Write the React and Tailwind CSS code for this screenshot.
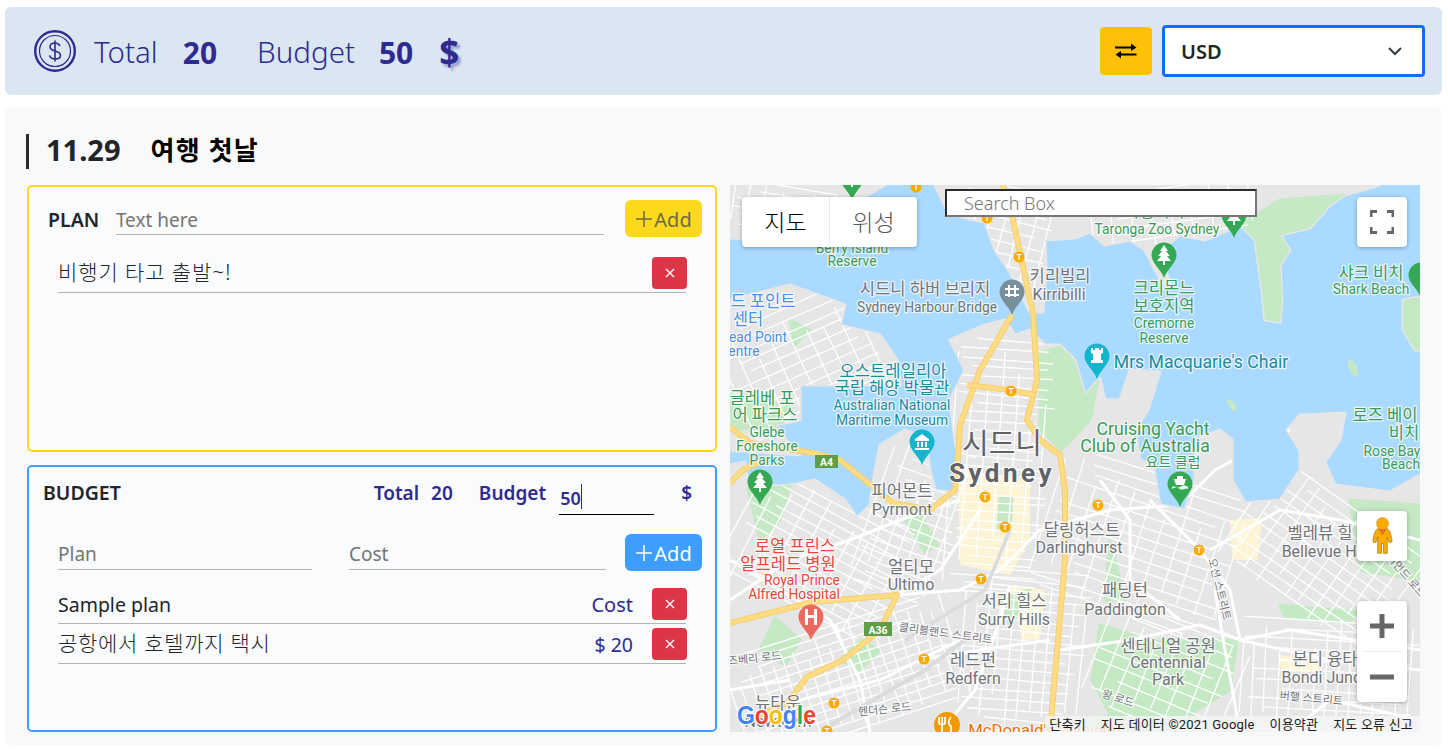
import React from "react";

const ink = "#2e2a8f";

const LAND = [
  "730,185 730,238 770,240 795,228 825,222 850,205 885,185",
  "935,185 948,212 965,218 985,222 995,250 1010,272 1030,312 1043,312 1046,270 1045,240 1075,238 1090,232 1105,245 1130,240 1145,250 1163,285 1170,285 1160,250 1180,235 1205,240 1240,225 1255,240 1262,290 1265,320 1280,322 1282,300 1280,265 1290,250 1280,235 1310,228 1330,205 1345,195 1380,185",
  "730,300 790,285 845,305 840,325 880,335 897,360 900,385 850,385 800,385 800,420 775,425 790,445 800,455 730,450",
  "730,465 745,462 748,488 790,485 815,480 845,500 857,518 870,505 875,470 880,445 905,430 925,437 930,470 935,490 955,493 960,470 955,440 950,400 965,370 950,340 985,325 1005,320 1015,335 1030,330 1045,345 1060,345 1075,360 1085,395 1100,378 1105,400 1120,400 1130,370 1160,372 1148,410 1135,430 1140,460 1153,465 1160,505 1185,510 1195,480 1195,440 1220,430 1232,440 1232,480 1245,503 1280,500 1300,470 1300,450 1287,430 1300,415 1345,413 1340,440 1325,462 1335,485 1390,492 1420,475 1420,732 730,732",
  "1420,297 1403,300 1403,330 1415,350 1420,350",
];

const PARKS = [
  "1240,225 1255,240 1262,290 1265,320 1280,322 1282,300 1280,265 1290,250 1280,235 1310,228 1330,205 1345,195 1280,200",
  "1040,352 1060,347 1075,362 1085,395 1098,380 1090,420 1062,450 1040,430",
  "1100,625 1150,640 1237,640 1230,690 1190,714 1110,714 1092,680",
  "1280,605 1357,612 1350,622 1285,618",
  "1350,500 1420,505 1420,580 1360,570",
  "915,505 938,545 925,552 905,520",
  "775,618 800,640 785,665 760,650",
  "860,640 880,650 860,670 840,660",
  "1000,498 1012,498 1010,530 998,530",
  "1110,540 1125,600 1105,600",
  "1403,300 1420,297 1420,350 1415,350 1403,330",
  "1090,720 1180,700 1210,732 1060,732",
  "748,488 790,485 780,520 760,540",
  "730,400 790,405 780,430 730,428",
  "1000,598 1030,590 1010,625",
  "790,320 810,330 795,345",
];

const TINT = [
  "958,470 1030,480 1030,540 1010,575 960,565",
  "1230,520 1262,518 1258,560 1232,560",
  "1278,655 1325,660 1320,672 1282,672",
  "1010,585 1045,590 1040,640 1022,640",
];

const DISTRICTS = [
  [730, 300, 170, 130, -24, 11, 18],
  [730, 185, 110, 50, 10, 9, 16],
  [950, 185, 100, 130, 15, 11, 15],
  [1090, 185, 170, 60, -8, 12, 20],
  [730, 490, 180, 130, 28, 10, 18],
  [870, 440, 90, 160, 20, 11, 13],
  [950, 340, 100, 260, 4, 9, 15],
  [1040, 470, 200, 150, 18, 11, 19],
  [1230, 500, 190, 120, 35, 11, 16],
  [730, 620, 240, 112, -18, 9, 12],
  [960, 570, 130, 162, 5, 10, 12],
  [1090, 620, 150, 112, 22, 13, 18],
  [1240, 620, 180, 112, 3, 10, 12],
];

let seed = 17;
const rnd = () => {
  seed = (seed * 1103515245 + 12345) & 0x7fffffff;
  return seed / 0x7fffffff;
};

const STREETS = DISTRICTS.map(([x, y, w, h, a, s, t]) => {
  const lines = [];
  for (let yy = y; yy < y + h; yy += s) {
    const off = rnd() * w * 0.25;
    lines.push([x + off, yy + rnd() * 3, x + w - rnd() * w * 0.2, yy + rnd() * 3]);
  }
  for (let xx = x; xx < x + w; xx += t) {
    const off = rnd() * h * 0.3;
    lines.push([xx + rnd() * 3, y + off, xx + rnd() * 3, y + h - rnd() * h * 0.25]);
  }
  return { a, cx: x + w / 2, cy: y + h / 2, lines };
});

const WHITE_ROADS = [
  "730,600 790,560 850,540 900,520 960,500",
  "897,595 960,590 1000,570 1040,530 1110,510 1180,505 1215,470 1290,430",
  "1150,500 1200,550 1230,590 1240,640",
  "1210,550 1280,510 1340,520 1420,540",
  "1240,640 1290,630 1420,650",
  "1060,650 1130,640 1200,625 1240,640 1330,660 1420,670",
  "897,595 940,570 980,510",
  "730,560 780,590 830,620 860,680 870,732",
  "924,659 980,650 1050,640",
  "940,732 975,690 1000,620 1010,585",
  "1215,590 1225,650 1240,732",
  "800,700 880,680 960,640",
  "730,690 790,680",
  "1290,732 1330,700 1420,720",
  "1100,480 1130,520 1130,580 1180,620",
];

const HIGHWAYS = [
  "1003,185 1012,215 1023,267 1033,313 1037,380 1027,420 1040,440 1060,455 1065,490 1065,560 1058,640 1050,732",
  "1012,315 980,370 960,425 957,470 955,490 930,510 893,503 840,460 813,453 750,443 730,427",
  "730,483 743,470 763,460",
  "730,623 813,602 897,595 880,630 843,660 807,677 787,703 750,720",
  "967,385 1010,390 1035,395",
];

const GREEN = "#3a9b57";
const GREY = "#6f7479";
const BLUE = "#4a8fe8";
const TEAL = "#1b8a9e";
const RED = "#e8453c";
const DARK = "#5f6368";

const SIZE = { 15: 16.6, 12.5: 13.8, 14: 16, 16.5: 17.6, 13: 14 };

const LABELS = [
  ["타롱가 주", 1157, 217, 15, GREEN],
  ["Taronga Zoo Sydney", 1157, 234, 12.5, GREEN],
  ["Berry Island", 852, 253, 12.5, GREEN],
  ["Reserve", 852, 266, 12.5, GREEN],
  ["드 포인트", 763, 307, 15, BLUE],
  ["센터", 748, 325, 15, BLUE],
  ["ead Point", 758, 342, 12.5, BLUE],
  ["entre", 744, 356, 12.5, BLUE],
  ["시드니 하버 브리지", 925, 295, 15, GREY],
  ["Sydney Harbour Bridge", 927, 312, 12.5, GREY],
  ["키리빌리", 1060, 282, 15, GREY],
  ["Kirribilli", 1059, 300, 14, GREY],
  ["크리몬느", 1164, 294, 15, GREEN],
  ["보호지역", 1164, 312, 15, GREEN],
  ["Cremorne", 1164, 328, 12.5, GREEN],
  ["Reserve", 1164, 343, 12.5, GREEN],
  ["샤크 비치", 1371, 279, 15, GREEN],
  ["Shark Beach", 1371, 294, 12.5, GREEN],
  ["Mrs Macquarie's Chair", 1201, 368, 16.5, TEAL],
  ["오스트레일리아", 893, 377, 15, TEAL],
  ["국립 해양 박물관", 892, 394, 15, TEAL],
  ["Australian National", 892, 410, 12.5, TEAL],
  ["Maritime Museum", 892, 425, 12.5, TEAL],
  ["글레베 포", 762, 404, 15, GREEN],
  ["어 파크스", 765, 421, 15, GREEN],
  ["Glebe", 767, 437, 12.5, GREEN],
  ["Foreshore", 767, 451, 12.5, GREEN],
  ["Parks", 767, 465, 12.5, GREEN],
  ["Cruising Yacht", 1153, 435, 16.5, GREEN],
  ["Club of Australia", 1145, 452, 16.5, GREEN],
  ["요트 클럽", 1173, 467, 13, GREEN],
  ["로즈 베이", 1385, 421, 15, GREEN],
  ["비치", 1404, 439, 15, GREEN],
  ["Rose Bay", 1392, 456, 12.5, GREEN],
  ["Beach", 1401, 469, 12.5, GREEN],
  ["피어몬트", 902, 497, 15, GREY],
  ["Pyrmont", 902, 515, 14, GREY],
  ["달링허스트", 1082, 536, 15, GREY],
  ["Darlinghurst", 1079, 553, 14, GREY],
  ["벨레뷰 힐", 1320, 539, 15, GREY],
  ["Bellevue Hill", 1325, 557, 14, GREY],
  ["로열 프린스", 795, 552, 15, RED],
  ["알프레드 병원", 788, 570, 15, RED],
  ["Royal Prince", 802, 585, 12.5, RED],
  ["Alfred Hospital", 794, 599, 12.5, RED],
  ["얼티모", 911, 573, 15, GREY],
  ["Ultimo", 911, 590, 14, GREY],
  ["패딩턴", 1125, 596, 15, GREY],
  ["Paddington", 1125, 615, 14, GREY],
  ["서리 힐스", 1014, 607, 15, GREY],
  ["Surry Hills", 1014, 625, 14, GREY],
  ["센테니얼 공원", 1168, 652, 15, GREY],
  ["Centennial", 1168, 668, 14, GREY],
  ["Park", 1168, 685, 14, GREY],
  ["레드펀", 973, 666, 15, GREY],
  ["Redfern", 973, 684, 14, GREY],
  ["본디 융타", 1325, 665, 15, GREY],
  ["Bondi Junction", 1335, 683, 14, GREY],
  ["뉴타운", 778, 709, 15, GREY],
  ["Newtown", 778, 727, 14, GREY],
  ["McDonald's Wynyard", 1045, 736, 15, "#e8710a"],
];

const ROAD_NAMES = [
  ["클리블랜드 스트리트", 945, 637, 8],
  ["오션 스트리트", 1216, 590, 76],
  ["헨더슨 로드", 885, 713, -6],
  ["즈베리 로드", 755, 662, -6],
  ["왕 로드", 1117, 702, 18],
  ["버핼 스트리트", 1311, 702, 5],
  ["리치먼드 로드", 1400, 574, 50],
];

const T_STOPS = [
  [916, 187], [987, 218], [1019, 257], [1011, 391], [985, 497], [1005, 527],
  [981, 579], [924, 659], [834, 703], [827, 731], [1098, 505], [1199, 550],
];

function Pin({ x, y, color, children }) {
  return (
    <g transform={`translate(${x} ${y})`}>
      <path d="M0 35C-3 26-12.500 20-12.500 12A12.500 12.500 0 0 1 12.500 12C12.500 20 3 26 0 35Z" fill={color} />
      {children}
    </g>
  );
}

const Tree = () => (
  <path d="M0 2L4 8H2L6 13H3L7 18H1V22H-1V18H-7L-3 13H-6L-2 8H-4Z" fill="#fff" />
);

function MapDrawing() {
  return (
    <svg
      viewBox="730 185 690 547"
      className="absolute inset-0 w-full h-full font-['Roboto','Noto_Sans_CJK_KR',sans-serif]"
    >
      <defs>
        <clipPath id="land">
          {LAND.map((p, i) => (
            <polygon key={i} points={p} />
          ))}
        </clipPath>
      </defs>
      <rect x="730" y="185" width="690" height="547" fill="#aadaff" />
      {LAND.map((p, i) => (
        <polygon key={i} points={p} fill="#e6e6e6" stroke="#e6e6e6" strokeWidth="3" strokeLinejoin="round" />
      ))}
      <ellipse cx="1353" cy="368" rx="4" ry="9" transform="rotate(-25 1353 368)" fill="#c5e8c5" />
      <ellipse cx="1232" cy="405" rx="3" ry="7" transform="rotate(-35 1232 405)" fill="#c5e8c5" />
      <g clipPath="url(#land)">
        {TINT.map((p, i) => (
          <polygon key={i} points={p} fill="#fdf4d6" />
        ))}
        {PARKS.map((p, i) => (
          <polygon key={i} points={p} fill="#c5e8c5" stroke="#c5e8c5" strokeWidth="3" strokeLinejoin="round" />
        ))}
        {STREETS.map((d, i) => (
          <g key={i} transform={`rotate(${d.a} ${d.cx} ${d.cy})`} stroke="#fff" strokeWidth="1.3">
            {d.lines.map((l, j) => (
              <line key={j} x1={l[0]} y1={l[1]} x2={l[2]} y2={l[3]} />
            ))}
          </g>
        ))}
        {WHITE_ROADS.map((p, i) => (
          <polyline key={i} points={p} fill="none" stroke="#fff" strokeWidth="3" strokeLinejoin="round" />
        ))}
      </g>
      <path d="M905 640L985 590L1010 530" fill="none" stroke="#d9dbdd" strokeWidth="3.5" />
      <path d="M830 725L925 670L965 640" fill="none" stroke="#d9dbdd" strokeWidth="4" />
      {HIGHWAYS.map((p, i) => (
        <g key={i} fill="none" strokeLinejoin="round">
          <polyline points={p} stroke="#f6cf6d" strokeWidth="6" />
          <polyline points={p} stroke="#fddc85" strokeWidth="4" />
        </g>
      ))}
      {T_STOPS.map(([x, y], i) => (
        <g key={i}>
          <circle cx={x} cy={y} r="5.5" fill="#f9ab00" />
          <path d={`M${x - 2.5} ${y - 2.5}H${x + 2.5}M${x} ${y - 2.5}V${y + 3}`} stroke="#fff" strokeWidth="1.2" />
        </g>
      ))}
      <g paintOrder="stroke" stroke="#ffffff" strokeOpacity="0.75" strokeWidth="2.5" strokeLinejoin="round" textAnchor="middle">
        {LABELS.map(([t, x, y, s, c], i) => (
          <text key={i} x={x} y={y} fontSize={SIZE[s]} fill={c}>
            {t}
          </text>
        ))}
        {ROAD_NAMES.map(([t, x, y, r], i) => (
          <text key={i} x={x} y={y} fontSize="11" fill={GREY} transform={`rotate(${r} ${x} ${y})`}>
            {t}
          </text>
        ))}
        <text x="1002" y="454" fontSize="29" fill={DARK}>시드니</text>
        <text x="1002" y="482" fontSize="26" fontWeight="700" letterSpacing="3.5" fill={DARK}>Sydney</text>
      </g>
      <g>
        <rect x="815" y="455" width="23" height="13" fill="#5f9e44" />
        <text x="826.500" y="466" fontSize="10.500" fontWeight="700" fill="#fff" textAnchor="middle">A4</text>
        <rect x="864" y="622" width="28" height="14" fill="#5f9e44" />
        <text x="878" y="633.500" fontSize="10.500" fontWeight="700" fill="#fff" textAnchor="middle">A36</text>
      </g>
      <Pin x={852} y={165} color="#34a853"><Tree /></Pin>
      <Pin x={1234} y={203} color="#34a853"><Tree /></Pin>
      <Pin x={1164} y={243} color="#34a853"><Tree /></Pin>
      <Pin x={1421} y={263} color="#34a853" />
      <Pin x={760} y={470} color="#34a853"><Tree /></Pin>
      <Pin x={1097} y={344} color="#12b5cb">
        <path d="M-6 4H-4V6H-2V4H2V6H4V4H6V9L4 10V16H6V19H-6V16H-4V10L-6 9Z" fill="#fff" />
      </Pin>
      <Pin x={922} y={430} color="#12b5cb">
        <path d="M-7 9L0 4L7 9V11H-7ZM-5 12H-3V17H-5ZM-1 12H1V17H-1ZM3 12H5V17H3ZM-7 18H7V20H-7Z" fill="#fff" />
      </Pin>
      <Pin x={1012} y={280} color="#78909c">
        <path d="M-7 8H-4V5H-2V8H2V5H4V8H7V10H4V17H2V10H-2V17H-4V10H-7ZM-7 14H7V16H-7Z" fill="#fff" />
      </Pin>
      <Pin x={1180} y={472} color="#34a853">
        <path d="M-3 4H3V7H6L4 13H-4L-6 7H-3ZM-8 15C-5 13-3 17 0 15S5 13 8 15V17C5 15 3 19 0 17S-5 15-8 17Z" fill="#fff" />
      </Pin>
      <Pin x={811} y={605} color="#ea6a5f">
        <path d="M-6 4H-3V10H3V4H6V20H3V13H-3V20H-6Z" fill="#fff" />
      </Pin>
      <circle cx="947" cy="725" r="13" fill="#f29900" />
      <path d="M942 717V733M939 717V723C939 725 945 725 945 723V717M951 717C948 720 948 725 951 726V733" fill="none" stroke="#fff" strokeWidth="1.7" />
      <text
        x="737"
        y="724"
        fontSize="25"
        fontFamily="'Liberation Sans', sans-serif"
        fontWeight="700"
        stroke="#ffffff"
        strokeWidth="2.5"
        paintOrder="stroke"
        textLength="79"
        lengthAdjust="spacingAndGlyphs"
      >
        <tspan fill="#4285f4">G</tspan>
        <tspan fill="#ea4335">o</tspan>
        <tspan fill="#fbbc05">o</tspan>
        <tspan fill="#4285f4">g</tspan>
        <tspan fill="#34a853">l</tspan>
        <tspan fill="#ea4335">e</tspan>
      </text>
    </svg>
  );
}

function Pegman() {
  return (
    <svg viewBox="0 0 26 40" className="w-[25px] h-[40px]">
      <path
        d="M9 12H17C20 13 22 16 23 26L20 27L18 21V38H14V28H12V38H8V21L6 27L3 26C4 16 6 13 9 12Z"
        fill="#f9ab00"
        stroke="#a8741a"
        strokeWidth="0.7"
      />
      <circle cx="13" cy="7" r="6.3" fill="#f9ab00" stroke="#c28a1e" strokeWidth="0.5" />
      <path d="M8.500 13H17.500L13 19Z" fill="#e2702c" />
    </svg>
  );
}

function MapPanel() {
  return (
    <div className="relative h-[547px] overflow-hidden bg-[#aadaff]">
      <MapDrawing />
      <div className="absolute left-3 top-3 flex h-[50px] w-[175px] rounded-sm bg-white text-[23px] font-light shadow-[0_1px_4px_rgba(0,0,0,0.3)]">
        <div className="flex flex-1 items-center justify-center border-r border-[#ebebeb] text-black">지도</div>
        <div className="flex flex-1 items-center justify-center text-[#565656]">위성</div>
      </div>
      <input
        readOnly
        placeholder="Search Box"
        className="absolute left-[215px] top-1 h-[28px] w-[312px] border-2 border-b-[#767676] border-l-[#2b2b2b] border-r-[#767676] border-t-[#2b2b2b] bg-white pl-[17px] text-[18px] font-light outline-none placeholder:text-[#757575]"
      />
      <div className="absolute right-[13px] top-3 flex h-[50px] w-[50px] items-center justify-center rounded-sm bg-white shadow-[0_1px_4px_rgba(0,0,0,0.3)]">
        <svg viewBox="0 0 24 24" className="h-[24px] w-[24px]" fill="none" stroke="#666" strokeWidth="3">
          <path d="M1 7V1.500H7M17 1.500H23V7M23 17V22.500H17M7 22.500H1V17" />
        </svg>
      </div>
      <div className="absolute right-[13px] top-[326px] flex h-[50px] w-[50px] items-center justify-center rounded-sm bg-white shadow-[0_1px_4px_rgba(0,0,0,0.3)]">
        <Pegman />
      </div>
      <div className="absolute right-[13px] top-[416px] flex h-[101px] w-[50px] flex-col items-center rounded-sm bg-white shadow-[0_1px_4px_rgba(0,0,0,0.3)]">
        <div className="flex h-[50px] w-full items-center justify-center">
          <svg viewBox="0 0 24 24" className="h-[24px] w-[24px]" fill="#666">
            <path d="M9.500 0H14.500V9.500H24V14.500H14.500V24H9.500V14.500H0V9.500H9.500Z" />
          </svg>
        </div>
        <div className="h-px w-[38px] bg-[#e6e6e6]" />
        <div className="flex h-[50px] w-full items-center justify-center">
          <svg viewBox="0 0 24 24" className="h-[24px] w-[24px]" fill="#666">
            <rect x="0" y="9.500" width="24" height="5" />
          </svg>
        </div>
      </div>
      <div className="absolute bottom-0 right-0 flex h-[16px] w-[375px] items-center justify-end gap-[15px] bg-[rgba(245,245,245,0.85)] pr-[7px] font-['Roboto','Noto_Sans_CJK_KR',sans-serif] text-[13px] leading-none tracking-[0.2px] text-[#1a1a1a]">
        <span>단축키</span>
        <span>지도 데이터 ©2021 Google</span>
        <span>이용약관</span>
        <span>지도 오류 신고</span>
      </div>
    </div>
  );
}

function AddButton({ className }) {
  return (
    <button className={`flex h-[37px] w-[77px] shrink-0 items-center justify-center rounded-md text-[20px] ${className}`}>
      <svg viewBox="0 0 18 18" className="mr-px h-[18px] w-[18px]" fill="none" stroke="currentColor" strokeWidth="1.5">
        <path d="M9 1V17M1 9H17" />
      </svg>
      <span className="mt-[2px]">Add</span>
    </button>
  );
}

function DeleteButton() {
  return (
    <button className="flex h-[32px] w-[35px] shrink-0 items-center justify-center rounded bg-[#dc3545]">
      <svg viewBox="0 0 10 10" className="h-[10px] w-[10px]" fill="none" stroke="#fff" strokeWidth="1.4">
        <path d="M1 1L9 9M9 1L1 9" />
      </svg>
    </button>
  );
}

function UnderInput({ placeholder, className }) {
  return (
    <input
      readOnly
      placeholder={placeholder}
      className={`h-[31px] border-b border-[#b5b5b5] bg-transparent text-[19px] outline-none placeholder:text-[#757575] ${className}`}
    />
  );
}

export default function App() {
  return (
    <div className="min-h-[749px] bg-white pt-[7px] font-['Noto_Sans','Noto_Sans_CJK_KR',sans-serif] text-[#212529]">
      <header className="ml-[5px] mr-[6px] flex h-[88px] items-center rounded-md bg-[#dae6f1] pl-[29px] pr-[17px]">
        <svg viewBox="0 0 42 42" className="h-[42px] w-[42px]" fill="none" stroke={ink}>
          <circle cx="21" cy="21" r="19.800" strokeWidth="2.400" />
          <circle cx="21" cy="21" r="15.500" strokeWidth="1.200" />
          <path d="M26 16C25 13.500 23 13 21 13C18 13 16 14.500 16 17C16 22.500 26.500 19.500 26.500 25.500C26.500 28 24 29 21 29C18.500 29 16.500 28 15.500 25.500M21 10.500V31.500" strokeWidth="1.600" />
        </svg>
        <span className="ml-[18px] mt-[2px] text-[29.5px] font-light text-[#2e2a8f]">Total</span>
        <span className="ml-[25px] mt-[2px] text-[30px] font-bold text-[#2e2a8f]">20</span>
        <span className="ml-[40px] mt-[2px] text-[29.5px] font-light text-[#2e2a8f]">Budget</span>
        <span className="ml-[24px] mt-[2px] text-[30px] font-bold text-[#2e2a8f]">50</span>
        <span className="ml-[26px] mt-[2px] text-[35px] font-bold text-[#2e2a8f] [text-shadow:3px_3px_2px_rgba(46,42,143,0.35)]">$</span>
        <div className="ml-auto flex items-center gap-[10px]">
          <button className="flex h-[48px] w-[52px] items-center justify-center rounded bg-[#ffc107]">
            <svg viewBox="0 0 22 16" className="h-[16px] w-[22px]" fill="#000">
              <path d="M0 3.500H16V0.500L21.500 4.500L16 8V5.500H0ZM21.500 10.500V12.500H6V15.500L0.500 11.500L6 8V10.500Z" />
            </svg>
          </button>
          <div className="flex h-[52px] w-[263px] items-center justify-between rounded border-[3px] border-[#0d6efd] bg-white pl-4 pr-[19px] text-[20px] font-semibold">
            <span className="mt-[2px]">USD</span>
            <svg viewBox="0 0 16 16" className="h-[16px] w-[16px]" fill="none" stroke="#343a40" strokeWidth="2">
              <path d="M2 5L8 11L14 5" />
            </svg>
          </div>
        </div>
      </header>

      <main className="ml-[5px] mr-[6px] mt-3 rounded-md bg-[#f8f9fa] px-[22px] pb-[13px] pt-[27px]">
        <div className="mb-4 -ml-px flex h-[35px] items-center border-l-[3px] border-[#2b2b2b] pb-[3px] pl-[17px]">
          <span className="text-[29px] font-bold">11.29</span>
          <span className="ml-[30px] text-[26px] font-bold tracking-[1.2px] text-black">여행 첫날</span>
        </div>
        <div className="grid grid-cols-2 gap-[13px]">
          <div className="flex flex-col gap-[13px]">
            <section className="h-[267px] rounded-[5px] border-2 border-[#fcd91c] bg-[#fafbfd] pl-[19px] pr-[13px] pt-[13px]">
              <div className="flex items-center">
                <span className="mt-[2px] w-[68px] text-[19.5px] font-semibold">PLAN</span>
                <UnderInput placeholder="Text here" className="mt-[2px] w-[489px] pt-[2px]" />
                <AddButton className="ml-[21px] bg-[#fcd91c] text-[#6d6a45]" />
              </div>
              <div className="ml-[10px] mr-[16px] mt-[20px] flex h-[36px] items-start justify-between border-b border-[#b5b5b5]">
                <span className="text-[21px] font-light tracking-[0.9px]">비행기 타고 출발~!</span>
                <span className="-mr-px">
                  <DeleteButton />
                </span>
              </div>
            </section>
            <section className="h-[267px] rounded-[5px] border-2 border-[#3d9eff] bg-[#fafbfd] pl-[14px] pr-[13px] pt-[13px]">
              <div className="flex h-[36px] items-start">
                <span className="-mt-[2px] text-[19.5px] font-semibold">BUDGET</span>
                <span className="-mt-px ml-auto text-[19px] font-semibold text-[#2e2a8f]">Total</span>
                <span className="-mt-px ml-[12px] text-[19px] font-semibold text-[#2e2a8f]">20</span>
                <span className="-mt-px ml-[26px] text-[19px] font-semibold text-[#2e2a8f]">Budget</span>
                <div className="ml-[13px] flex h-[35px] w-[95px] items-end border-b border-black pb-[4px] pl-px text-[18px] font-semibold text-[#2e2a8f]">
                  <span className="leading-[24px]">50</span>
                  <span className="mb-[1px] h-[25px] w-px bg-[#2e2a8f]" />
                </div>
                <span className="-mt-px ml-[27px] mr-[10px] text-[19px] font-semibold text-[#2e2a8f]">$</span>
              </div>
              <div className="mt-[18px] flex items-start pl-[15px]">
                <UnderInput placeholder="Plan" className="mt-[5px] w-[254px]" />
                <UnderInput placeholder="Cost" className="ml-[37px] mt-[5px] w-[257px]" />
                <AddButton className="ml-[19px] bg-[#3d9eff] text-white" />
              </div>
              <div className="ml-[15px] mr-[16px] mt-[17px] flex h-[36px] items-start border-b border-[#b5b5b5]">
                <span className="mt-[2px] text-[19.5px]">Sample plan</span>
                <span className="ml-auto mr-[19px] mt-[2px] text-[20px] text-[#2e2a8f]">Cost</span>
                <span className="-mr-px">
                  <DeleteButton />
                </span>
              </div>
              <div className="ml-[15px] mr-[16px] mt-[4px] flex h-[36px] items-start border-b border-[#b5b5b5]">
                <span className="text-[21px] font-light tracking-[0.7px]">공항에서 호텔까지 택시</span>
                <span className="ml-auto mr-[19px] mt-[2px] text-[19.5px] text-[#2e2a8f]">$ 20</span>
                <span className="-mr-px">
                  <DeleteButton />
                </span>
              </div>
            </section>
          </div>
          <MapPanel />
        </div>
      </main>
    </div>
  );
}
